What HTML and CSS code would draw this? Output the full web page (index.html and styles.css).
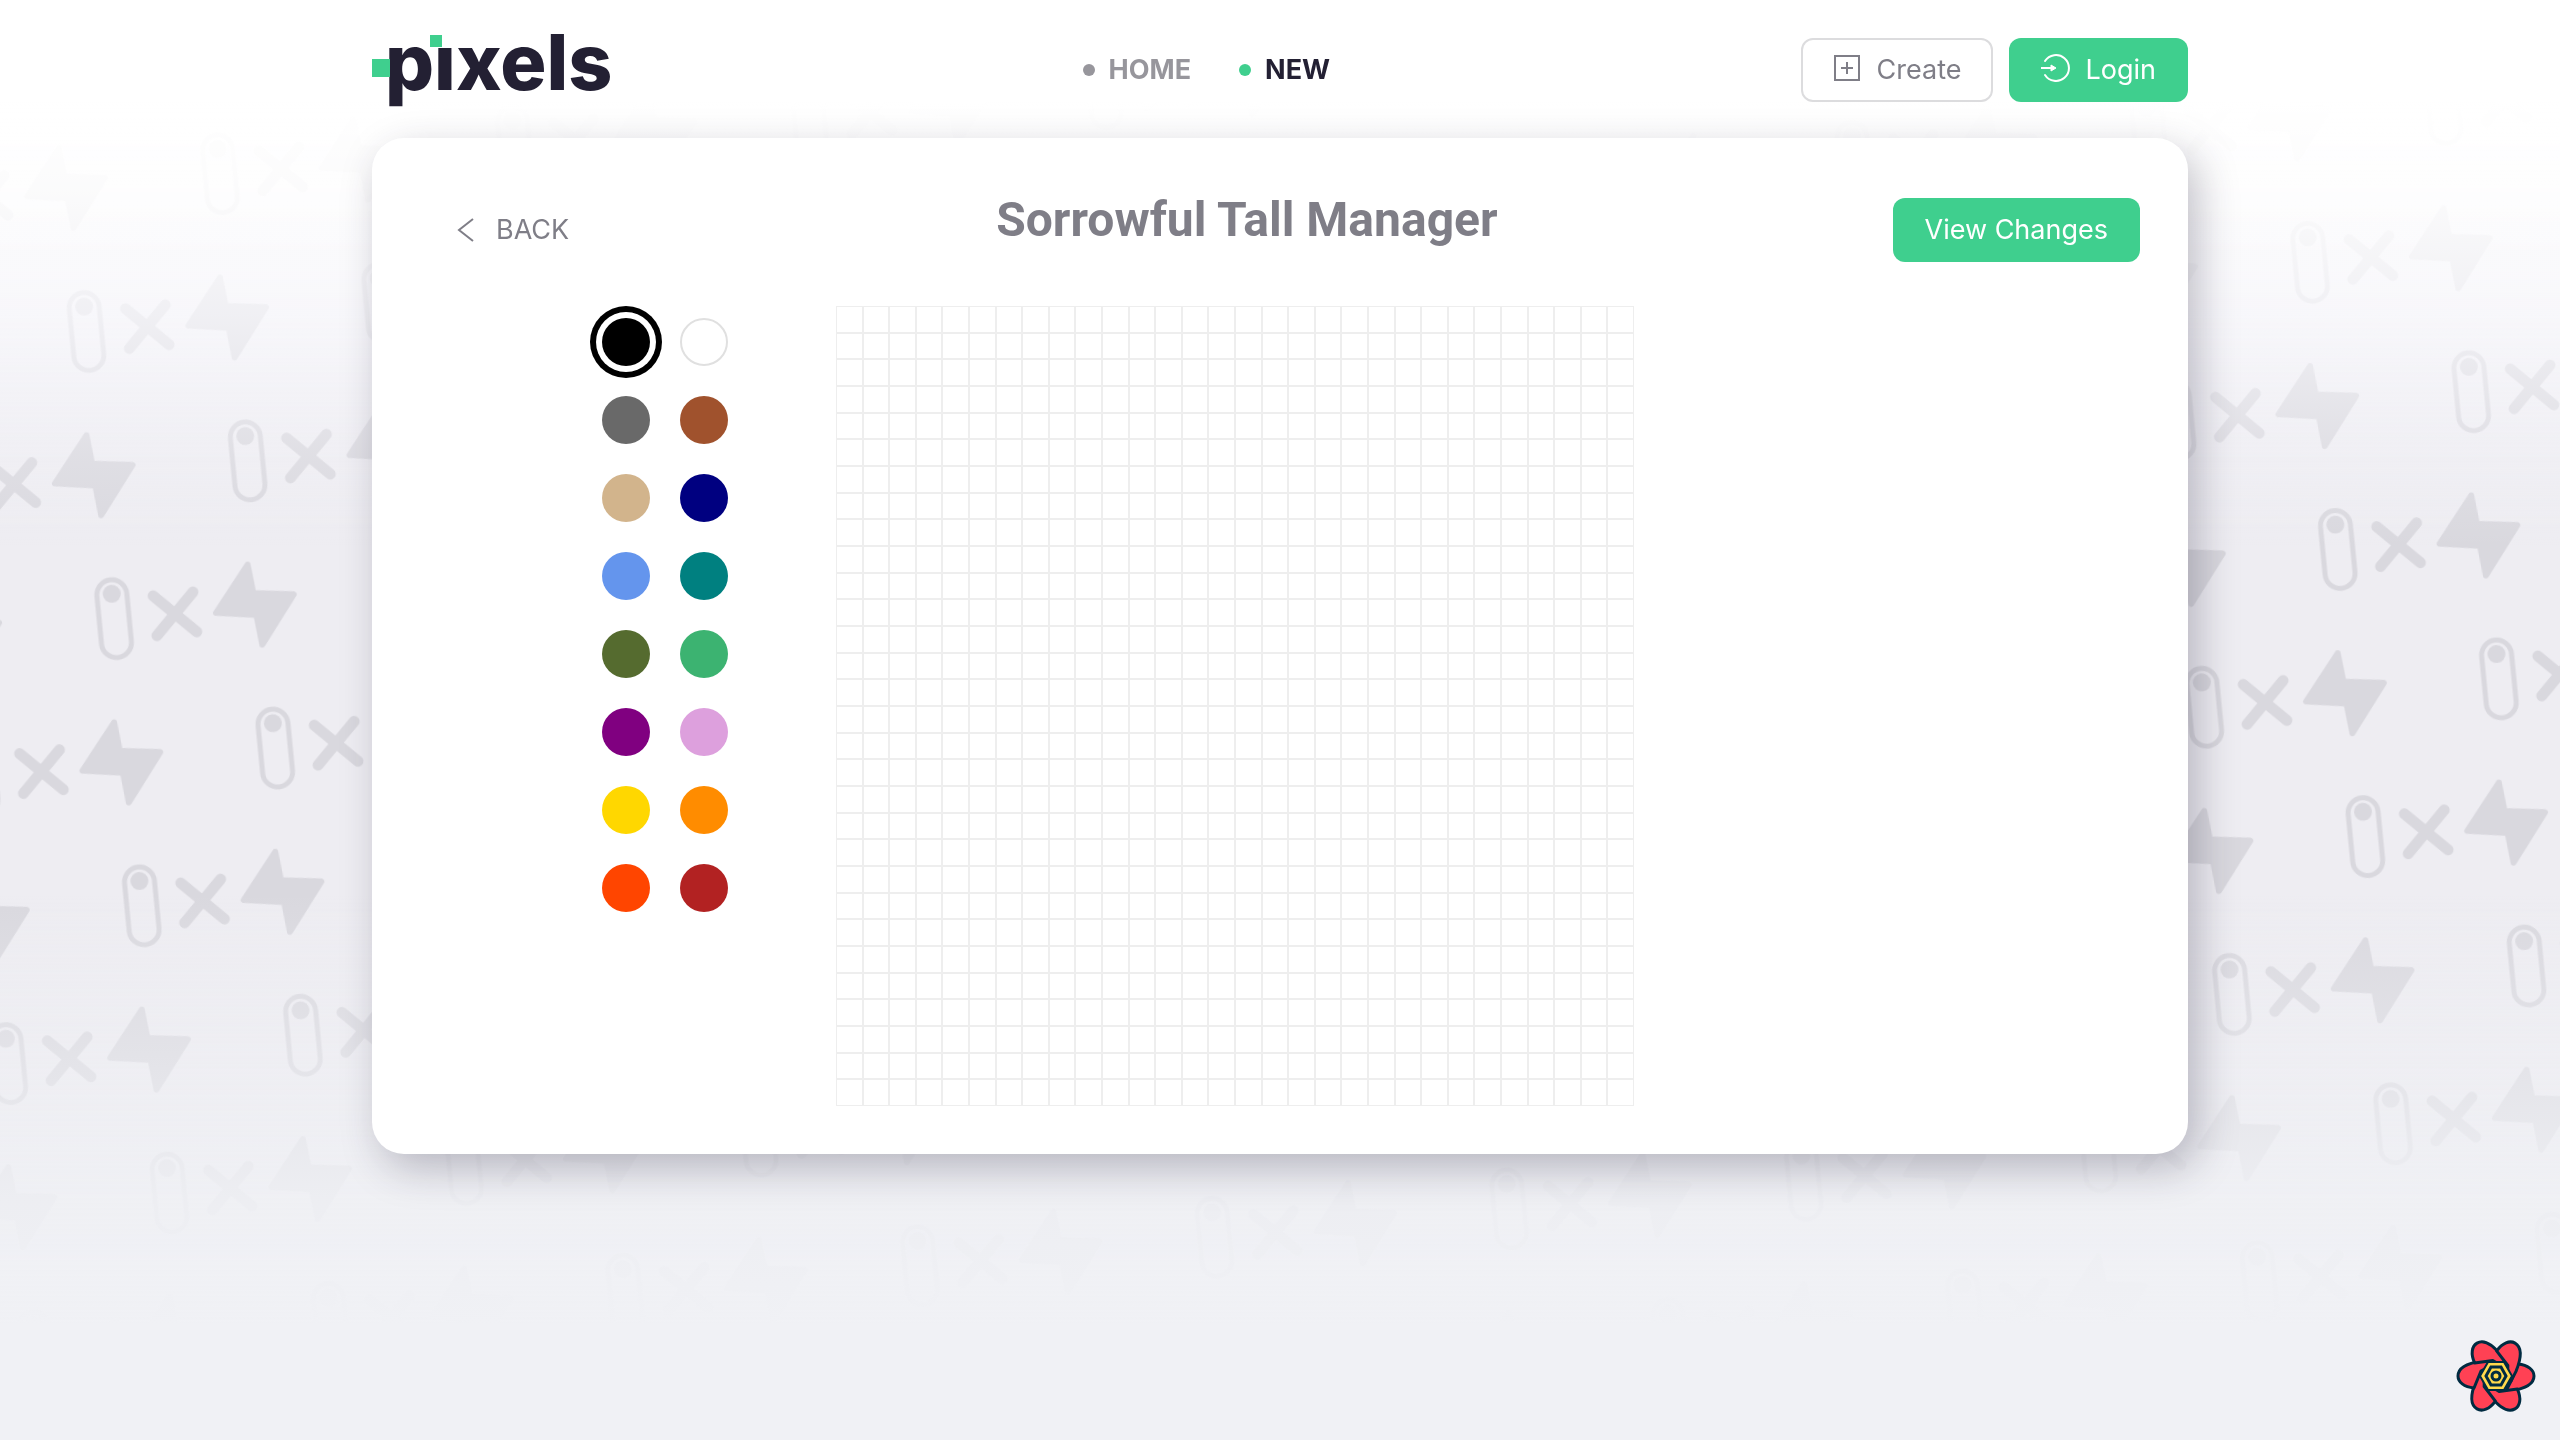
FILE: index.html
```html
<!DOCTYPE html>
<html lang="en">
<head>
    <meta charset="UTF-8">
    <meta name="viewport" content="width=device-width, initial-scale=1.0">
    <title>Pixels</title>
    <link rel="stylesheet" href="styles.css">
</head>
<body>
    <svg class="backdrop" aria-hidden="true">
        <defs>
            <g id="motif">
                <rect x="-15" y="-39" width="30" height="78" rx="15" fill="none" stroke="#d9d8de" stroke-width="5"/>
                <circle cx="0" cy="-25" r="9" fill="#d9d8de"/>
                <path d="M41 -19 L81 21 M81 -19 L41 21" stroke="#d9d8de" stroke-width="11" stroke-linecap="round"/>
                <path d="M138 -41 L102 4 L142 10 L145 40 L181 -7 L141 -12 Z" fill="#d9d8de" stroke="#d9d8de" stroke-width="6" stroke-linejoin="round"/>
            </g>
            <pattern id="icons" width="296" height="288.5" patternUnits="userSpaceOnUse" patternTransform="translate(86.5 331.5) rotate(-5.5) translate(-30 -50)">
                <use href="#motif" x="30" y="50"/>
                <use href="#motif" x="178" y="194.25"/>
                <use href="#motif" x="-118" y="194.25"/>
            </pattern>
        </defs>
        <rect width="100%" height="100%" fill="url(#icons)"/>
    </svg>
    <div class="fade"></div>

    <div class="container">
        <header class="header">
            <a class="logo" href="#" aria-label="pixels">
                <svg width="240" height="76" viewBox="0 0 240 76">
                    <text class="logo-text" x="13" y="58">pıxels</text>
                    <rect x="0" y="27" width="18" height="18" fill="#3fcf8e"/>
                    <rect x="58" y="3" width="12" height="12" fill="#3fcf8e"/>
                </svg>
            </a>
            <nav class="nav">
                <a class="nav-link" href="#">HOME</a>
                <a class="nav-link active" href="#">NEW</a>
            </nav>
            <div class="actions">
                <button class="btn outline">
                    <svg class="icon" viewBox="0 0 28 28" fill="none" stroke="currentColor" stroke-width="2">
                        <rect x="2" y="0" width="24" height="24"/>
                        <path d="M14 6v12M8 12h12"/>
                    </svg>
                    Create
                </button>
                <button class="btn primary">
                    <svg class="icon" viewBox="0 0 28 28" fill="none" stroke="currentColor" stroke-width="2">
                        <path d="M4 5a13 13 0 1 1 0 14" stroke-linecap="round"/>
                        <path d="M0 12h12"/>
                        <path d="M10 9l5 3l-5 3z" fill="currentColor" stroke-width="1"/>
                    </svg>
                    Login
                </button>
            </div>
        </header>

        <main class="card">
            <div class="card-header">
                <button class="btn back">
                    <svg class="icon" viewBox="0 0 28 28" fill="none" stroke="currentColor" stroke-width="2">
                        <path d="M21 3L7 14l14 11"/>
                    </svg>
                    BACK
                </button>
                <h1 class="title">Sorrowful Tall Manager</h1>
                <button class="btn primary">View Changes</button>
            </div>
            <div class="editor">
                <div class="palette" id="palette" role="radiogroup" aria-label="Colors"></div>
                <div class="pixels" id="pixels"></div>
            </div>
        </main>
    </div>

    <button class="devtools" aria-label="Open React Query Devtools">
        <svg width="84" height="84" viewBox="-42 -42 84 84">
            <defs>
                <path id="petal" d="M38 0C38 8 28 13 14 15L-5 16L15 5L22 -12C32 -11 38 -6 38 0Z"/>
            </defs>
            <g fill="#ff4154" stroke="#002b41" stroke-width="3" stroke-linejoin="round">
                <use href="#petal"/>
                <use href="#petal" transform="rotate(60)"/>
                <use href="#petal" transform="rotate(120)"/>
                <use href="#petal" transform="rotate(180)"/>
                <use href="#petal" transform="rotate(240)"/>
                <use href="#petal" transform="rotate(300)"/>
            </g>
            <path d="M-16 0L-8 -14H8L16 0L8 14H-8Z" fill="#ffd94c" stroke="#002b41" stroke-width="2"/>
            <path d="M-10 0L-5 -9H5L10 0L5 9H-5Z" fill="#ffd94c" stroke="#002b41" stroke-width="3"/>
            <circle r="4" fill="#ffd94c" stroke="#002b41" stroke-width="3"/>
        </svg>
    </button>

    <script src="script.js"></script>
</body>
</html>
```
FILE: styles.css
```css
* {
    margin: 0;
    padding: 0;
    box-sizing: border-box;
}

body {
    font-family: Inter, 'Liberation Sans', sans-serif;
    font-size: 27px;
    line-height: 32px;
    color: #7f7e87;
    background: #eeedf2;
    min-height: 100vh;
}

.backdrop,
.fade {
    position: fixed;
    top: 0;
    left: 0;
    width: 100%;
    height: 100%;
    z-index: -1;
}

.fade {
    background: linear-gradient(
        #ffffff 7%,
        rgba(255, 255, 255, 0.9) 13%,
        rgba(252, 252, 255, 0.65) 22%,
        rgba(248, 248, 252, 0.2) 32%,
        rgba(240, 241, 245, 0) 38%,
        rgba(240, 241, 245, 0) 62%,
        rgba(239, 240, 244, 0.4) 72%,
        rgba(239, 240, 244, 0.9) 83%,
        #f0f1f5 92%
    );
}

.container {
    max-width: 1816px;
    margin: 0 auto;
}

.header {
    display: flex;
    align-items: center;
    justify-content: space-between;
    height: 138px;
    padding-top: 2px;
}

.logo svg {
    display: block;
    overflow: visible;
}

.logo-text {
    font-family: Inter, sans-serif;
    font-weight: 800;
    font-size: 77px;
    fill: #232033;
}

.nav {
    display: flex;
    gap: 48px;
}

.nav-link {
    display: flex;
    align-items: center;
    gap: 14px;
    color: #97969c;
    font-weight: 700;
    text-decoration: none;
}

.nav-link::before {
    content: '';
    width: 12px;
    height: 12px;
    border-radius: 50%;
    background: #97969c;
}

.nav-link.active {
    color: #232033;
}

.nav-link.active::before {
    background: #3fcf8e;
}

.actions {
    display: flex;
    gap: 16px;
}

.btn {
    display: flex;
    align-items: center;
    gap: 16px;
    height: 64px;
    padding: 0 32px;
    border: none;
    border-radius: 12px;
    background: none;
    color: #7f7e87;
    font: inherit;
    cursor: pointer;
}

.btn.primary {
    background: #3fcf8e;
    color: #fff;
}

.btn.outline {
    background: #fff;
    border: 2px solid #dcdcde;
    padding: 0 30px;
}

.icon {
    width: 28px;
    height: 28px;
    overflow: visible;
}

.card {
    background: #fff;
    border-radius: 32px;
    padding: 60px 48px 48px;
    box-shadow: 10px 14px 40px rgba(40, 35, 60, 0.28);
}

.card-header {
    display: flex;
    align-items: flex-start;
    justify-content: space-between;
    margin-bottom: 44px;
}

.title {
    font-family: Roboto, sans-serif;
    font-size: 48px;
    line-height: 44px;
    font-weight: 700;
}

.editor {
    display: flex;
    align-items: flex-start;
}

.palette {
    display: grid;
    grid-template-columns: repeat(2, 48px);
    gap: 30px;
    padding: 12px 108px 12px 182px;
}

.swatch {
    appearance: none;
    width: 48px;
    height: 48px;
    border-radius: 50%;
    cursor: pointer;
}

.swatch.light {
    border: 2px solid #e0e0e0;
}

.swatch:checked {
    box-shadow: 0 0 0 6px #fff, 0 0 0 12px #000;
}

.pixels {
    display: grid;
    grid-template-columns: repeat(30, 1fr);
    width: 798px;
    height: 800px;
}

.pixel {
    border: 1px solid #eeeeee;
}

.devtools {
    position: fixed;
    right: 22px;
    bottom: 22px;
    border: none;
    background: none;
    cursor: pointer;
}

.devtools svg {
    display: block;
}
```
FILE: script.js
```js
const colors = [
    'black', 'white',
    'dimgray', 'sienna',
    'tan', 'navy',
    'cornflowerblue', 'teal',
    'darkolivegreen', 'mediumseagreen',
    'purple', 'plum',
    'gold', 'darkorange',
    'orangered', 'firebrick'
];

const palette = document.getElementById('palette');
colors.forEach((color, i) => {
    const swatch = document.createElement('input');
    swatch.type = 'radio';
    swatch.name = 'color';
    swatch.className = color === 'white' ? 'swatch light' : 'swatch';
    swatch.style.background = color;
    swatch.setAttribute('aria-label', color);
    swatch.checked = i === 0;
    palette.appendChild(swatch);
});

// 30x30 drawing area
const pixels = document.getElementById('pixels');
for (let i = 0; i < 30 * 30; i++) {
    const pixel = document.createElement('div');
    pixel.className = 'pixel';
    pixel.addEventListener('click', () => {
        const selected = palette.querySelector(':checked');
        pixel.style.background = selected.style.background;
    });
    pixels.appendChild(pixel);
}
```
